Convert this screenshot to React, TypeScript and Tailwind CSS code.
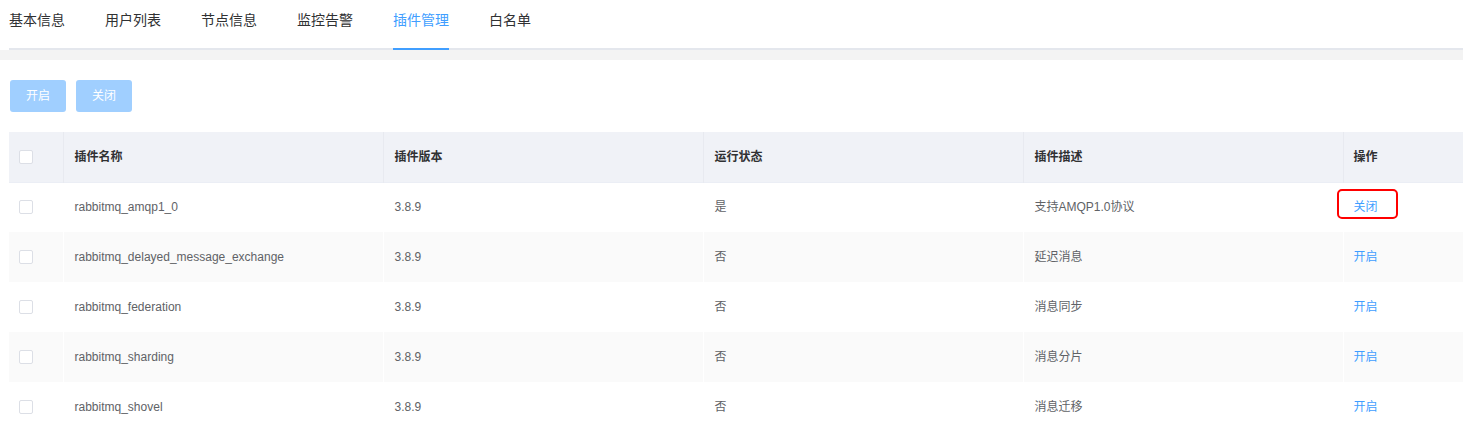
import React from "react";

const tabs = ["基本信息", "用户列表", "节点信息", "监控告警", "插件管理", "白名单"];

const rows = [
  { name: "rabbitmq_amqp1_0", ver: "3.8.9", on: "是", desc: "支持AMQP1.0协议", op: "关闭", mark: true },
  { name: "rabbitmq_delayed_message_exchange", ver: "3.8.9", on: "否", desc: "延迟消息", op: "开启" },
  { name: "rabbitmq_federation", ver: "3.8.9", on: "否", desc: "消息同步", op: "开启" },
  { name: "rabbitmq_sharding", ver: "3.8.9", on: "否", desc: "消息分片", op: "开启" },
  { name: "rabbitmq_shovel", ver: "3.8.9", on: "否", desc: "消息迁移", op: "开启" },
];

function Box() {
  return <span className="block w-[14px] h-[14px] rounded-[2px] border border-[#dcdfe6] bg-white" />;
}

export default function App() {
  const font = { fontFamily: '"Liberation Sans", Arial, "Noto Sans CJK SC", sans-serif' };
  return (
    <div className="w-[1463px] h-[432px] overflow-hidden bg-white" style={font}>
      <div className="ml-[9px] flex border-b-2 border-[#e4e7ed] h-[50px]">
        {tabs.map((t, i) => (
          <div
            key={t}
            className={
              "relative h-[48px] leading-[40px] text-[14px] " +
              (i === 0 ? "pr-[20px] " : "px-[20px] ") +
              (i === 4 ? "text-[#409eff]" : "text-[#303133]")
            }
          >
            {t}
            {i === 4 && (
              <span className="absolute left-[20px] right-[20px] -bottom-[2px] h-[2px] bg-[#409eff]" />
            )}
          </div>
        ))}
      </div>
      <div className="h-[10px] bg-[#f3f3f3]" />
      <div className="pl-[10px] pt-[20px] flex gap-[10px]">
        <button className="w-[56px] h-[32px] rounded-[3px] bg-[#a0cfff] text-white text-[12px]">开启</button>
        <button className="w-[56px] h-[32px] rounded-[3px] bg-[#a0cfff] text-white text-[12px]">关闭</button>
      </div>
      <div className="ml-[9px] mt-[20px]">
        <table className="table-fixed w-[1454px] border-collapse text-[12px]">
          <colgroup>
            <col className="w-[54px]" />
            <col className="w-[320px]" />
            <col className="w-[320px]" />
            <col className="w-[320px]" />
            <col className="w-[320px]" />
            <col className="w-[120px]" />
          </colgroup>
          <thead>
            <tr className="h-[50px] bg-[#f0f2f7] border-b border-[#ebeef5] text-[#303133] font-bold text-left">
              <th className="pl-[10px] border-r border-[#e8eaf0]"><Box /></th>
              <th className="pl-[11px] border-r border-[#e8eaf0]">插件名称</th>
              <th className="pl-[11px] border-r border-[#e8eaf0]">插件版本</th>
              <th className="pl-[11px] border-r border-[#e8eaf0]">运行状态</th>
              <th className="pl-[11px] border-r border-[#e8eaf0]">插件描述</th>
              <th className="pl-[10px]">操作</th>
            </tr>
          </thead>
          <tbody className="text-[#606266]">
            {rows.map((r, i) => (
              <tr key={r.name} className={"h-[50px] " + (i % 2 === 1 ? "bg-[#fafafa]" : "bg-white")}>
                <td className="pl-[10px] border-r border-white"><Box /></td>
                <td className="pl-[11px] border-r border-white">{r.name}</td>
                <td className="pl-[11px] border-r border-white">{r.ver}</td>
                <td className="pl-[11px] border-r border-white">{r.on}</td>
                <td className="pl-[11px] border-r border-white">{r.desc}</td>
                <td className="pl-[10px]">
                  <span className="relative inline-block leading-[16px] text-[#409eff]">
                    {r.op}
                    {r.mark && (
                      <span className="absolute -left-[17px] -top-[10px] w-[61px] h-[30px] rounded-[5px] border-2 border-[#ff0000]" />
                    )}
                  </span>
                </td>
              </tr>
            ))}
          </tbody>
        </table>
      </div>
    </div>
  );
}
